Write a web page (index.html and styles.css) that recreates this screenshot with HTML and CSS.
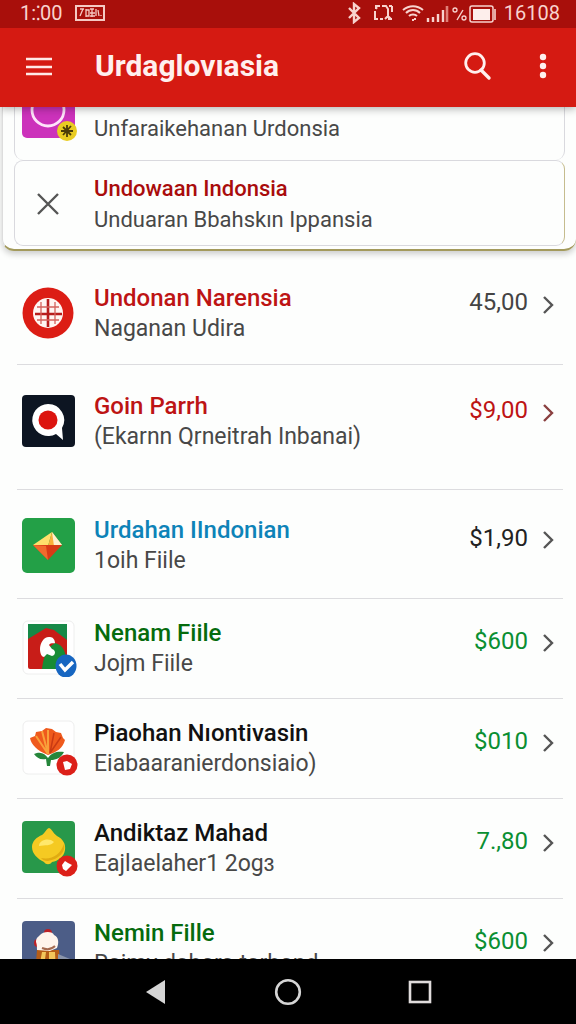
FILE: index.html
```html
<!DOCTYPE html>
<html lang="id">
<head>
    <meta charset="UTF-8">
    <meta name="viewport" content="width=device-width, initial-scale=1.0">
    <title>Urdaglovıasia</title>
    <link rel="stylesheet" href="styles.css">
</head>
<body>
    <header>
        <div class="status-bar">
            <span class="clock">1:⁚00</span>
            <svg class="status-card" width="30" height="17" viewBox="0 0 30 17" fill="none" stroke="#f5c9c3">
                <rect x="1" y="1" width="28" height="14" stroke-width="2"/>
                <path d="M5 11l3-7M5 4h4M11 4v8M11 5h3v6h-3M15 4h4M17 4v8M15 8h5M15 11h5M21 4v7M23 5l1 6M26 10v1" stroke-width="1.3"/>
            </svg>
            <svg class="status-icons" width="150" height="22" viewBox="0 0 150 22" fill="none" stroke="#f8d3ce">
                <path d="M3 6l10 10-5 4V2l5 4L3 16" stroke-width="2.4"/>
                <path d="M34 4h-4v3M29 9v8h3M34 17h3M36 4h4l2 3v7l3 3M42 17h4M46 4v6M43 4h3M31 5l-1 2M39 17l3-3" stroke-width="2"/>
                <path d="M57 8c6-5 14-5 20 0M60 11c4-4 10-4 14 0M63 14c2-2 6-2 8 0" stroke-width="2"/>
                <path d="M66 18l2 0M69 16v2" stroke-width="2"/>
                <path d="M82 16v4M87 15v5M92 12v8M97 8v12" stroke-width="2.4"/>
                <path d="M101 4v16" stroke="#e08078" stroke-width="2.6"/>
                <path d="M117 8l-6 10" stroke-width="1.4"/>
                <circle cx="109" cy="8" r="2" stroke-width="1.3"/>
                <circle cx="118" cy="16" r="2" stroke-width="1.3"/>
                <rect x="124" y="4" width="23" height="16" rx="2" stroke-width="1.5"/>
                <rect x="127" y="7" width="17" height="11" fill="#fdeeeb" stroke="none"/>
                <path d="M149 7v11" stroke-width="1.6"/>
            </svg>
            <span class="clock">16108</span>
        </div>
        <div class="app-bar">
            <button type="button" class="icon-btn" aria-label="Menu">
                <svg width="28" height="22" viewBox="0 0 28 22" stroke="#ffe9e6" stroke-width="2.6"><path d="M1 4h26M1 12h26M1 19h26"/></svg>
            </button>
            <h1>Urdaglovıasia</h1>
            <button type="button" class="icon-btn" aria-label="Search">
                <svg width="30" height="30" viewBox="0 0 30 30" fill="none" stroke="#fff0ee" stroke-linecap="round"><circle cx="12" cy="12" r="9.300" stroke-width="2.8"/><path d="M18 19l8 8" stroke-width="3.4"/></svg>
            </button>
            <button type="button" class="icon-btn more" aria-label="More options">
                <svg width="8" height="28" viewBox="0 0 8 28" fill="#fff0ee"><circle cx="4" cy="5" r="3.2"/><circle cx="4" cy="14" r="3.2"/><circle cx="4" cy="23" r="3.2"/></svg>
            </button>
        </div>
    </header>

    <main>
        <section class="panel">
            <div class="card card-cut">
                <svg class="icon" width="58" height="59" viewBox="0 0 58 59">
                    <rect width="53" height="53" rx="5" fill="#cc32bb"/>
                    <circle cx="26" cy="25" r="16" fill="none" stroke="#ffe3fa" stroke-width="2.8"/>
                    <circle cx="45" cy="46" r="10" fill="#e9cc22"/>
                    <path d="M45 40v12M39 46h12M41 42l8 8M49 41l-8 9" stroke="#4a3b08" stroke-width="1.8"/>
                </svg>
                <div class="text">
                    <p>Unfaraikehanan Urdonsia</p>
                </div>
            </div>
            <div class="card">
                <button type="button" class="icon close" aria-label="Close">
                    <svg width="22" height="22" viewBox="0 0 22 22" fill="none" stroke="#555" stroke-width="2.4"><path d="M1 1l20 20M21 1L1 21"/></svg>
                </button>
                <div class="text">
                    <h2 class="dark-red">Undowaan Indonsia</h2>
                    <p>Unduaran Bbahskın Ippansia</p>
                </div>
            </div>
        </section>

        <ul class="list">
            <li class="row row-first">
                <svg class="icon" width="58" height="53" viewBox="0 0 58 53">
                    <circle cx="26" cy="26" r="25.500" fill="#dc1d15"/>
                    <circle cx="26" cy="26" r="15" fill="#fff5f2"/>
                    <path d="M26 12v28M13 27h27" stroke="#b71c1c" stroke-width="2.600"/>
                    <path d="M19 15v22M33 15v22M15 20h22M15 33h22" stroke="#d4625c" stroke-width="1.300"/>
                </svg>
                <div class="text">
                    <h2 class="red">Undonan Narensia</h2>
                    <p>Naganan Udira</p>
                </div>
                <span class="price">45,00</span>
                <a href="#" class="chevron" aria-label="Open Undonan Narensia"><svg width="12" height="18" viewBox="0 0 12 18"><path d="M2 1l8 8-8 8"/></svg></a>
            </li>
            <li class="row row-tall">
                <svg class="icon" width="58" height="53" viewBox="0 0 58 53">
                    <rect width="53" height="52" rx="4" fill="#0d1522"/>
                    <path d="M26 9a16 16 0 1 0 8 30l7 6-1-12A16 16 0 0 0 26 9z" fill="#fff"/>
                    <circle cx="26" cy="25" r="9.500" fill="#dc140f"/>
                </svg>
                <div class="text">
                    <h2 class="red">Goin Parrh</h2>
                    <p>(Ekarnn Qrneitrah Inbanai)</p>
                </div>
                <span class="price red">$9,00</span>
                <a href="#" class="chevron brown" aria-label="Open Goin Parrh"><svg width="12" height="18" viewBox="0 0 12 18"><path d="M2 1l8 8-8 8"/></svg></a>
            </li>
            <li class="row row-medium">
                <svg class="icon" width="58" height="55" viewBox="0 0 58 55">
                    <rect width="53" height="55" rx="5" fill="#23a047"/>
                    <path d="M30 14L11 27l15 1z" fill="#ffe06b"/>
                    <path d="M30 14l10 13-14 1z" fill="#fbb13a"/>
                    <path d="M30 14l2 14 8-1z" fill="#fff0cf"/>
                    <path d="M11 27l29 0L26 42z" fill="#d93a16"/>
                    <path d="M11 27l13 1 2 14z" fill="#f16a2d"/>
                </svg>
                <div class="text">
                    <h2 class="blue">Urdahan IIndonian</h2>
                    <p>1oih Fiile</p>
                </div>
                <span class="price black">$1,90</span>
                <a href="#" class="chevron" aria-label="Open Urdahan IIndonian"><svg width="12" height="18" viewBox="0 0 12 18"><path d="M2 1l8 8-8 8"/></svg></a>
            </li>
            <li class="row">
                <svg class="icon" width="58" height="57" viewBox="0 0 58 57">
                    <rect x="1" y="1" width="51" height="53" rx="5" fill="#fff" stroke="#eee"/>
                    <rect x="6" y="4" width="39" height="45" rx="2" fill="#c81d18"/>
                    <path d="M6 4h39v16L32 10l-8-2L6 19z" fill="#168847"/>
                    <path d="M20 49c1-9 3-15 6-21l7-5c8 2 10 8 11 15v11z" fill="#188b35"/>
                    <path d="M28 17c-6-1-10 6-10 12 0 5 2 8 4 8l3-3 5 2c4-1 4-6 0-7l-3-4c2-3 6-1 6-2 0-3-2-6-5-6z" fill="#fff"/>
                    <ellipse cx="44" cy="46" rx="10.500" ry="11.500" fill="#1766c1"/>
                    <path d="M38 44l5 6 8-8" fill="none" stroke="#fff" stroke-width="3.500"/>
                </svg>
                <div class="text">
                    <h2 class="green">Nenam Fiile</h2>
                    <p>Jojm Fiile</p>
                </div>
                <span class="price bright-green">$600</span>
                <a href="#" class="chevron" aria-label="Open Nenam Fiile"><svg width="12" height="18" viewBox="0 0 12 18"><path d="M2 1l8 8-8 8"/></svg></a>
            </li>
            <li class="row">
                <svg class="icon" width="58" height="57" viewBox="0 0 58 57">
                    <rect x="1" y="1" width="51" height="53" rx="5" fill="#fff" stroke="#eee"/>
                    <path d="M26 35C15 31 9 24 8 18l5-2 1-4 6-1 4-3 6 1 4 3 5 1 2 5 2 2c-2 8-8 12-17 15z" fill="#ef5a1d"/>
                    <path d="M26 34L14 16M26 34L20 11M26 34L26 10" stroke="#f9a13a" stroke-width="2"/>
                    <path d="M28 33l4-20M28 33l11-16" stroke="#c93a13" stroke-width="1.500"/>
                    <path d="M12 34c7-3 11 0 14 4 4-6 10-7 16-6-3 6-8 8-13 8l-1 6h-3l-1-7c-6 1-9-1-12-5z" fill="#26863b"/>
                    <circle cx="45" cy="45" r="10.500" fill="#dc2019"/>
                    <path d="M41 42l4-1 5 3-2 5-5 1z" fill="#fff"/>
                </svg>
                <div class="text">
                    <h2>Piaohan Nıontivasin</h2>
                    <p>Eiabaaranierdonsiaio)</p>
                </div>
                <span class="price bright-green">$010</span>
                <a href="#" class="chevron" aria-label="Open Piaohan Nıontivasin"><svg width="12" height="18" viewBox="0 0 12 18"><path d="M2 1l8 8-8 8"/></svg></a>
            </li>
            <li class="row">
                <svg class="icon" width="58" height="57" viewBox="0 0 58 57">
                    <rect y="1" width="53" height="52" rx="4" fill="#28984a"/>
                    <path d="M27 8c3 1 4 5 8 8 6 3 9 8 8 14-1 7-7 11-13 12-2 3-6 3-8 0-6-3-12-8-12-15 0-6 5-10 10-12 3-2 4-6 7-7z" fill="#f5ca22"/>
                    <path d="M17 26c0-6 10-9 15-4-3 4-9 3-15 4z" fill="#ffe86c"/>
                    <path d="M42 24c2 8-5 15-16 17-4 0-6-2-7-3 11 2 19-3 23-14z" fill="#e0ac12"/>
                    <circle cx="45" cy="46" r="10.500" fill="#dc2019"/>
                    <path d="M40 45l3-4 3 2 4 2-3 3-3 3-3-2z" fill="#fff"/>
                </svg>
                <div class="text">
                    <h2>Andiktaz Mahad</h2>
                    <p>Eajlaelaher1 2ogɜ</p>
                </div>
                <span class="price bright-green">7.,80</span>
                <a href="#" class="chevron" aria-label="Open Andiktaz Mahad"><svg width="12" height="18" viewBox="0 0 12 18"><path d="M2 1l8 8-8 8"/></svg></a>
            </li>
            <li class="row">
                <svg class="icon" width="58" height="57" viewBox="0 0 58 57">
                    <rect y="1" width="53" height="53" rx="4" fill="#4c5d87"/>
                    <path d="M15 30h22l2 24H13z" fill="#b55d17"/>
                    <path d="M20 32h4l-3 22h-5zM27 32h6l1 22h-7z" fill="#f3c65a"/>
                    <path d="M36 34l12 5v15H36z" fill="#8b95aa"/>
                    <circle cx="16" cy="23" r="4" fill="#bd2025"/>
                    <circle cx="26" cy="13" r="4" fill="#bd2025"/>
                    <path d="M18 15c3-4 13-4 14 0 5 2 5 8 3 13l-7 3-13-1c0-4 0-5-1-8 0-4 2-5 4-7z" fill="#fff4ec"/>
                    <path d="M20 28c5 2 10 1 13-2" fill="none" stroke="#a56a50" stroke-width="2"/>
                </svg>
                <div class="text">
                    <h2 class="green">Nemin Fille</h2>
                    <p>Raimy dabara tarband</p>
                </div>
                <span class="price bright-green">$600</span>
                <a href="#" class="chevron" aria-label="Open Nemin Fille"><svg width="12" height="18" viewBox="0 0 12 18"><path d="M2 1l8 8-8 8"/></svg></a>
            </li>
        </ul>
    </main>

    <nav class="nav-bar">
        <button type="button" aria-label="Back"><svg width="28" height="28" viewBox="0 0 28 28"><path d="M4 14L23 2v24z" fill="#d5d5d5"/></svg></button>
        <button type="button" aria-label="Home"><svg width="28" height="28" viewBox="0 0 28 28"><circle cx="14" cy="14" r="11.800" fill="none" stroke="#d5d5d5" stroke-width="2.600"/></svg></button>
        <button type="button" aria-label="Recent apps"><svg width="28" height="28" viewBox="0 0 28 28"><rect x="4" y="4" width="20" height="20" fill="none" stroke="#e0dcdc" stroke-width="2.600"/></svg></button>
    </nav>
</body>
</html>
```
FILE: styles.css
```css
* {
    margin: 0;
    padding: 0;
    box-sizing: border-box;
}

body {
    font-family: Roboto, sans-serif;
    background-color: #fdfefd;
    display: flex;
    flex-direction: column;
    height: 100vh;
    overflow: hidden;
    color: #111;
}

button {
    background: none;
    border: none;
    cursor: pointer;
}

svg {
    display: block;
}

header {
    position: relative;
    z-index: 1;
    box-shadow: 0 2px 8px rgba(0, 0, 0, 0.3);
}

.status-bar {
    display: flex;
    align-items: center;
    height: 28px;
    padding: 0 16px 2px 20px;
    background-color: #a80f0b;
    color: #f8d3ce;
}

.clock {
    font-size: 20px;
    line-height: 24px;
}

.status-card {
    margin-left: 12px;
}

.status-icons {
    margin-left: auto;
    margin-right: 8px;
}

.app-bar {
    display: flex;
    align-items: center;
    height: 79px;
    padding: 0 29px 4px 25px;
    background-color: #d51a12;
}

.app-bar h1 {
    flex: 1;
    margin-left: 42px;
    font-size: 30px;
    line-height: 36px;
    font-weight: 700;
    color: #fff0ee;
}

.more {
    margin-left: 46px;
}

main {
    flex: 1;
    min-height: 0;
    overflow: hidden;
}

.panel {
    margin-left: 2px;
    padding: 0 11px 3px;
    border-left: 1px solid #ddd;
    border-bottom: 2px solid #a39a5c;
    border-radius: 0 0 12px 12px;
    box-shadow: 0 3px 6px rgba(0, 0, 0, 0.2);
}

.card {
    display: flex;
    align-items: center;
    padding: 12px 7px 10px;
    border: 1px solid #d9d9de;
    border-right-color: #c5bc8e;
    border-radius: 9px;
}

/* scrolled under the app bar */
.card-cut {
    height: 53px;
    align-items: flex-end;
    padding: 0 7px 16px;
    overflow: hidden;
    border-top: none;
    border-bottom: none;
    border-right-color: #d9d9de;
    border-radius: 0 0 9px 9px;
}

.icon {
    flex: none;
    width: 58px;
}

.close {
    display: flex;
    justify-content: center;
    padding-right: 6px;
}

.text {
    flex: 1;
    min-width: 0;
    margin-left: 14px;
    white-space: nowrap;
}

.text h2 {
    font-size: 24px;
    line-height: 32px;
    font-weight: 500;
}

.text p {
    font-size: 23px;
    line-height: 30px;
    color: #484848;
}

.card .text h2,
.card .text p {
    font-size: 22px;
}

.list {
    margin: 0 13px 0 17px;
    list-style: none;
}

.row {
    display: flex;
    align-items: center;
    padding: 18px 9px 19px 5px;
    border-bottom: 1px solid #dcdcdf;
}

.row-first {
    padding-top: 31px;
    padding-bottom: 20px;
}

.row-tall {
    padding-top: 25px;
    padding-bottom: 37px;
}

.row-medium {
    padding-top: 24px;
    padding-bottom: 22px;
}

.price {
    align-self: flex-start;
    margin-top: 8px;
    font-size: 24px;
    line-height: 32px;
    color: #444;
}

.chevron {
    align-self: flex-start;
    margin-top: 17px;
    margin-left: 14px;
}

.row-first .price,
.row-tall .price {
    margin-top: 4px;
}

.row-first .chevron,
.row-tall .chevron {
    margin-top: 14px;
}

.chevron path {
    fill: none;
    stroke: #555;
    stroke-width: 2.4;
}

.chevron.brown path {
    stroke: #8a4040;
}

.dark-red {
    color: #a90c0c;
}

.red,
.price.red {
    color: #bd1414;
}

.blue {
    color: #0d83b8;
}

.green {
    color: #056b0d;
}

.price.bright-green {
    color: #0a8f32;
}

.price.black {
    color: #222;
}

.nav-bar {
    display: flex;
    justify-content: center;
    align-items: center;
    gap: 104px;
    height: 65px;
    background-color: #000;
}
```
